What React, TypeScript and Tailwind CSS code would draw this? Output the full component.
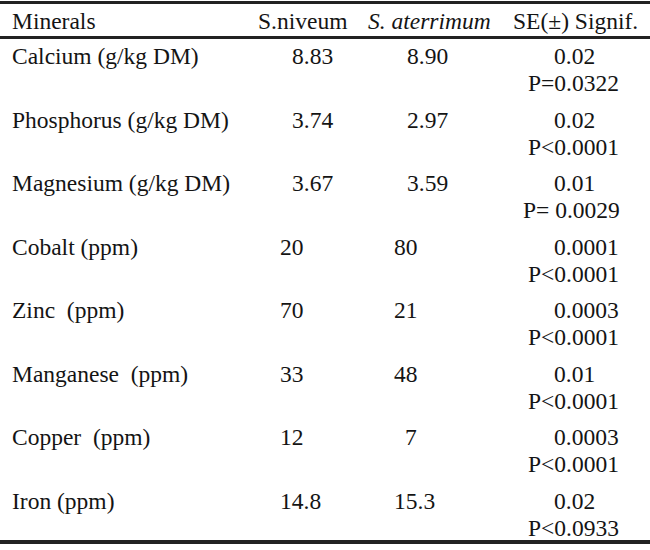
import React from 'react';

type Row = {
  name: string;
  a: string;
  aPad: string;
  b: string;
  bPad: string;
  se: string;
  p: string;
  pPad: string;
};

const rows: Row[] = [
  { name: 'Calcium (g/kg DM)', a: '8.83', aPad: 'pl-[34px]', b: '8.90', bPad: 'pl-[39px]', se: '0.02', p: 'P=0.0322', pPad: 'pl-[18px]' },
  { name: 'Phosphorus (g/kg DM)', a: '3.74', aPad: 'pl-[34px]', b: '2.97', bPad: 'pl-[39px]', se: '0.02', p: 'P<0.0001', pPad: 'pl-[18px]' },
  { name: 'Magnesium (g/kg DM)', a: '3.67', aPad: 'pl-[34px]', b: '3.59', bPad: 'pl-[39px]', se: '0.01', p: 'P= 0.0029', pPad: 'pl-[13px]' },
  { name: 'Cobalt (ppm)', a: '20', aPad: 'pl-[22px]', b: '80', bPad: 'pl-[26px]', se: '0.0001', p: 'P<0.0001', pPad: 'pl-[18px]' },
  { name: 'Zinc  (ppm)', a: '70', aPad: 'pl-[22px]', b: '21', bPad: 'pl-[26px]', se: '0.0003', p: 'P<0.0001', pPad: 'pl-[18px]' },
  { name: 'Manganese  (ppm)', a: '33', aPad: 'pl-[22px]', b: '48', bPad: 'pl-[26px]', se: '0.01', p: 'P<0.0001', pPad: 'pl-[18px]' },
  { name: 'Copper  (ppm)', a: '12', aPad: 'pl-[22px]', b: '7', bPad: 'pl-[37px]', se: '0.0003', p: 'P<0.0001', pPad: 'pl-[18px]' },
  { name: 'Iron (ppm)', a: '14.8', aPad: 'pl-[22px]', b: '15.3', bPad: 'pl-[26px]', se: '0.02', p: 'P<0.0933', pPad: 'pl-[18px]' },
];

const grid = 'grid grid-cols-[258px_110px_142px_1fr]';

export default function App() {
  return (
    <div
      className="w-[650px] h-[550px] bg-white text-[#141414] text-[23.5px] leading-[27px] whitespace-pre"
      style={{ fontFamily: '"Liberation Serif", "Times New Roman", serif' }}
    >
      <div className="pt-[1px]">
        <div className={`${grid} border-t-[3px] border-b-[3px] border-[#222] pt-[4px] pb-[1px]`}>
          <div className="pl-[12px]">Minerals</div>
          <div>S.niveum</div>
          <div className="italic">S. aterrimum</div>
          <div className="pl-[3px]">SE(±) Signif.</div>
        </div>
        {rows.map((r, i) => (
          <div
            key={r.name}
            className={`${grid} pt-[4px] ${i === rows.length - 1 ? 'pb-0' : 'pb-[5.5px]'}`}
          >
            <div className="pl-[12px]">{r.name}</div>
            <div className={r.aPad}>{r.a}</div>
            <div className={r.bPad}>{r.b}</div>
            <div className="flex flex-col">
              <span className="pl-[44px]">{r.se}</span>
              <span className={r.pPad}>{r.p}</span>
            </div>
          </div>
        ))}
        <div className="mt-[-2px] border-t-[4px] border-[#222]" />
      </div>
    </div>
  );
}
